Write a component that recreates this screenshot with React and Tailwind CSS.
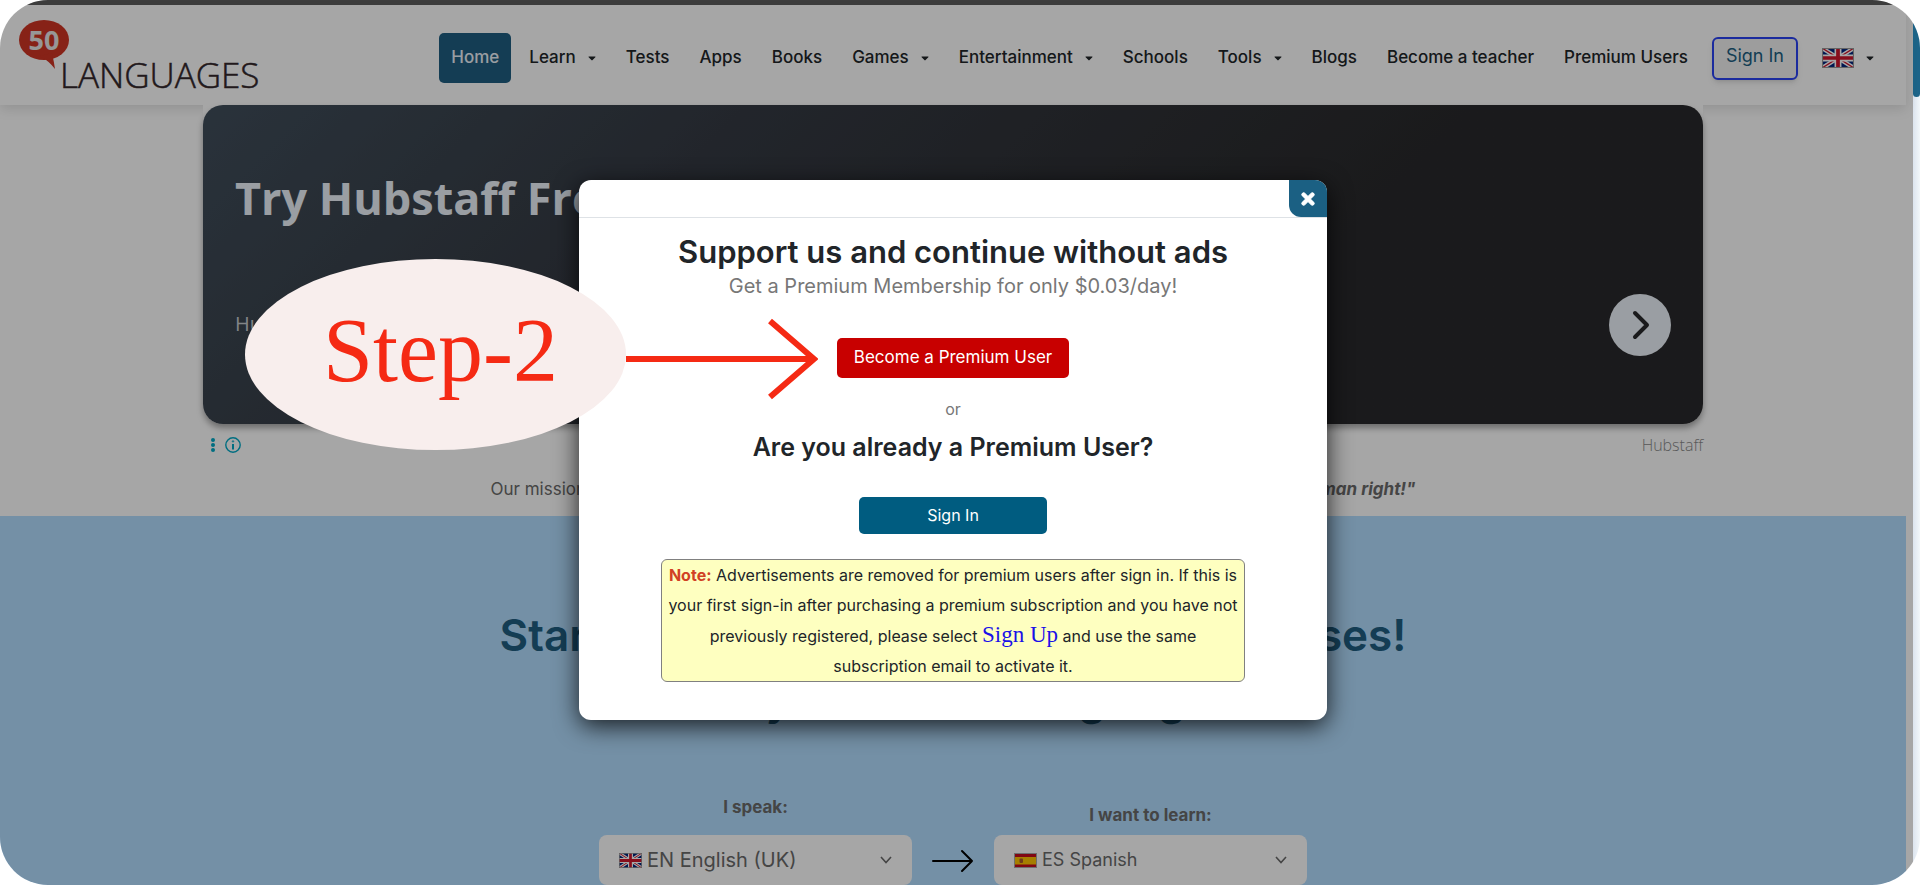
import { FaCaretDown, FaTimes } from "react-icons/fa";

const navItems = [
    { label: "Home", active: true },
    { label: "Learn", menu: true },
    { label: "Tests" },
    { label: "Apps" },
    { label: "Books" },
    { label: "Games", menu: true },
    { label: "Entertainment", menu: true },
    { label: "Schools" },
    { label: "Tools", menu: true },
    { label: "Blogs" },
    { label: "Become a teacher" },
    { label: "Premium Users" },
];

function Logo() {
    return (
        <svg viewBox="0 0 244 80" className="w-[244px] h-20 overflow-visible" role="img" aria-label="50 Languages">
            <ellipse cx="26" cy="22" rx="25" ry="20" fill="#cf3524" />
            <path d="M22 38 Q31 43 37 51 Q36 44 34 35 Z" fill="#cf3524" />
            <text x="26" y="32" textAnchor="middle" fontSize="27" className="font-['Open_Sans'] font-bold" fill="#e8e8e8">
                50
            </text>
            <text x="42" y="70" fontSize="35" className="font-['Open_Sans'] font-light" fill="#33272b" stroke="#33272b" strokeWidth="0.5">
                LANGUAGES
            </text>
        </svg>
    );
}

function FlagUK({ className }) {
    return (
        <svg viewBox="0 0 60 38" preserveAspectRatio="none" className={className} aria-hidden="true">
            <rect width="60" height="38" fill="#00247d" />
            <path d="M0 0 L60 38 M60 0 L0 38" stroke="#fff" strokeWidth="8" />
            <path d="M0 0 L60 38 M60 0 L0 38" stroke="#cf142b" strokeWidth="2.5" />
            <path d="M30 0 V38 M0 19 H60" stroke="#fff" strokeWidth="13" />
            <path d="M30 0 V38 M0 19 H60" stroke="#cf142b" strokeWidth="7" />
            <rect x="1" y="1" width="58" height="36" fill="none" stroke="#999" strokeWidth="2" />
        </svg>
    );
}

function FlagSpain({ className }) {
    return (
        <svg viewBox="0 0 46 30" preserveAspectRatio="none" className={className} aria-hidden="true">
            <rect width="46" height="30" fill="#c60b1e" />
            <rect y="8" width="46" height="15" fill="#ffc400" />
            <rect x="11" y="11" width="7" height="9" rx="2" fill="#ad5a2a" />
            <rect x="1" y="1" width="44" height="28" fill="none" stroke="#aaa" strokeWidth="2" />
        </svg>
    );
}

function Header() {
    return (
        <header className="flex items-center justify-between h-[100px] pt-1.5 pl-[18px] pr-5 bg-white shadow-[0_4px_12px_rgba(0,0,0,0.12)]">
            <a href="#home">
                <Logo />
            </a>
            <nav className="flex items-center gap-1.5 text-[17px] font-medium text-[#212529]">
                {navItems.map((item) =>
                    item.menu ? (
                        <button key={item.label} type="button" className="flex items-center gap-3 h-[50px] px-3">
                            {item.label}
                            <FaCaretDown className="w-2 h-3" />
                        </button>
                    ) : (
                        <a
                            key={item.label}
                            href="#menu"
                            className={
                                item.active
                                    ? "flex items-center h-[50px] px-3 rounded-[5px] bg-[#205e81] text-[#edf3fa]"
                                    : "flex items-center h-[50px] px-3"
                            }
                        >
                            {item.label}
                        </a>
                    )
                )}
                <a
                    href="#signin"
                    className="flex items-center h-[43px] ml-1.5 px-3 pb-1 border-2 border-[#2a42f3] rounded-md bg-[#f2f2f2] text-lg font-normal text-[#205e81] shadow-md"
                >
                    Sign In
                </a>
                <button type="button" aria-label="Language" className="flex items-center gap-3 ml-1.5 px-3">
                    <FlagUK className="w-8 h-5" />
                    <FaCaretDown className="w-2 h-3" />
                </button>
            </nav>
        </header>
    );
}

function AdBanner() {
    return (
        <section className="relative w-full max-w-[1500px] mx-auto bg-white font-['Open_Sans',sans-serif]">
            <div className="flex items-center justify-between h-[319px] px-8 rounded-[20px] bg-linear-135 from-[#404e5b] via-[#353a43] via-30% to-[#29292b] to-70% shadow-[0_4px_6px_rgba(0,0,0,0.35)] text-[#edf3fa]">
                <div className="flex flex-col gap-[82px] pb-6">
                    <h2 className="text-[45px] leading-[60px] font-bold">Try Hubstaff Free</h2>
                    <p className="text-xl leading-7 text-[#c8ccd0]">Hubstaff</p>
                </div>
                <button
                    type="button"
                    aria-label="Open"
                    className="flex items-center justify-center w-[62px] h-[62px] mt-[120px] rounded-full bg-[#edf3fa] text-[#29292b]"
                >
                    <svg viewBox="0 0 30 30" className="w-[30px] h-[30px]" fill="none" stroke="currentColor" strokeWidth="4" strokeLinecap="round" strokeLinejoin="round">
                        <path d="M10 3 L22 15 L10 27" />
                    </svg>
                </button>
            </div>
            <div className="flex items-center justify-between h-[42px] pl-2">
                <div className="flex items-center gap-2.5 text-[#00a9c6]">
                    <svg viewBox="0 0 4 14" className="w-1 h-3.5" fill="currentColor">
                        <circle cx="2" cy="2" r="2" />
                        <circle cx="2" cy="7" r="2" />
                        <circle cx="2" cy="12" r="2" />
                    </svg>
                    <svg viewBox="0 0 16 16" className="w-4 h-4" fill="none" stroke="currentColor">
                        <circle cx="8" cy="8" r="7.2" strokeWidth="1.4" />
                        <path d="M8 7 V12.4" strokeWidth="2" />
                        <circle cx="8" cy="4.4" r="0.7" strokeWidth="1" />
                    </svg>
                </div>
                <span className="text-base font-light text-[#8a8a8a]">Hubstaff</span>
            </div>
        </section>
    );
}

function LanguageSelect({ id, label, option, flag, gap, size }) {
    return (
        <div className="flex flex-col items-center w-[313px]">
            <label htmlFor={id} className={gap + " text-[17px] leading-6 font-bold text-[#6a6a6a]"}>
                {label}
            </label>
            <div className="relative w-full">
                <select id={id} className={size + " appearance-none w-full h-[50px] pl-12 pr-12 rounded-lg bg-white text-[#6a6a6a]"}>
                    <option>{option}</option>
                </select>
                <span className="absolute left-5 top-0 flex items-center h-[50px] pointer-events-none">{flag}</span>
                <span className="absolute right-5 top-0 flex items-center h-[50px] pointer-events-none">
                    <svg viewBox="0 0 12 8" className="w-3 h-2" fill="none" stroke="#6a6a6a" strokeWidth="1.6">
                        <path d="M1 1 L6 6.5 L11 1" />
                    </svg>
                </span>
            </div>
        </div>
    );
}

function Hero() {
    return (
        <section className="grow bg-[#b2ddff] pt-[87px]">
            <h1 className="text-center text-[44px] leading-[64px] font-semibold text-[#205e81]">
                Start learning with our free online courses!
                <br />
                for your native language
            </h1>
            <form className="flex items-end justify-center gap-5 mt-16">
                <LanguageSelect id="speak" label="I speak:" option="EN English (UK)" gap="mb-4" size="text-xl" flag={<FlagUK className="w-[23px] h-[15px]" />} />
                <svg viewBox="0 0 42 24" className="w-[42px] h-6 mb-3" fill="none" stroke="#000" strokeWidth="2">
                    <path d="M1 12 H40 M30 2 L40 12 L30 22" strokeLinecap="round" strokeLinejoin="round" />
                </svg>
                <LanguageSelect id="learn" label="I want to learn:" option="ES Spanish" gap="mb-2" size="text-lg" flag={<FlagSpain className="w-[23px] h-[15px]" />} />
            </form>
        </section>
    );
}

function PremiumModal() {
    return (
        <div role="dialog" aria-modal="true" aria-labelledby="premium-title" className="w-full max-w-[748px] rounded-xl bg-white text-[#212529] shadow-[0_6px_24px_rgba(0,0,0,0.8)]">
            <div className="flex justify-end h-[38px] border-b border-[#dee2e6]">
                <button type="button" aria-label="Close" className="flex items-center justify-center w-[38px] rounded-tr-xl rounded-bl-xl bg-[#1b6083] text-white">
                    <FaTimes className="w-[18px] h-[18px]" stroke="currentColor" strokeWidth="30" />
                </button>
            </div>
            <div className="flex flex-col items-center px-[82px] pt-3.5 pb-[38px] text-center">
                <h2 id="premium-title" className="text-[31px] leading-10 font-semibold">
                    Support us and continue without ads
                </h2>
                <p className="text-xl leading-7 text-[#777]">Get a Premium Membership for only $0.03/day!</p>
                <a href="#premium" className="flex items-center h-10 mt-[38px] px-[17px] rounded-[5px] bg-[#c80000] text-[17px] text-white">
                    Become a Premium User
                </a>
                <p className="mt-[19px] text-base leading-6 text-[#777]">or</p>
                <h3 className="mt-2.5 text-[25px] leading-8 font-semibold">Are you already a Premium User?</h3>
                <button type="button" className="w-[188px] h-[37px] mt-[34px] pb-0.5 rounded-[5px] bg-[#005c80] text-base text-white">
                    Sign In
                </button>
                <p className="w-full mt-[25px] border border-[#808080] rounded-md bg-[#feffc0] text-base leading-[30px]">
                    <strong className="text-[#d14124]">Note:</strong> Advertisements are removed for premium users after sign in. If this is your first
                    sign-in after purchasing a premium subscription and you have not previously registered, please select{" "}
                    <a href="#signup" className="font-['Liberation_Serif',serif] text-[23px] text-[#1a10e8]">
                        Sign Up
                    </a>{" "}
                    and use the same subscription email to activate it.
                </p>
            </div>
        </div>
    );
}

function StepCallout() {
    return (
        <div className="absolute left-[245px] top-[259px] flex items-center pointer-events-none">
            <div className="flex items-center justify-center w-[381px] h-[191px] pb-2 pl-2.5 rounded-[50%] bg-[#f8eeed] font-['Liberation_Serif',serif] text-[90px] leading-none text-[#f52a14]">
                Step-2
            </div>
            <svg viewBox="0 0 192 84" className="w-[192px] h-[84px] mt-2" fill="none" stroke="#f52a14" strokeWidth="6">
                <path d="M0 42 H188 M144 4 L188 42 L144 80" />
            </svg>
        </div>
    );
}

export default function App() {
    return (
        <div className="relative flex h-screen overflow-hidden rounded-[48px] bg-white font-[Inter,sans-serif]">
            <div className="relative flex flex-col grow">
                <div className="shrink-0 h-[5px] bg-[#5f5f5f]"></div>
                <div className="flex flex-col grow mr-[7px]">
                    <Header />
                    <AdBanner />
                    <p className="flex justify-between w-full max-w-[925px] mx-auto pt-[9px] pb-[13px] text-[17px] leading-7 text-[#6a6a6a]">
                        <span>Our mission</span>
                        <em className="font-bold">human right!"</em>
                    </p>
                    <Hero />
                </div>

                {/* Backdrop and dialog */}
                <div className="absolute inset-0 flex items-start justify-center pt-[180px] pr-[7px] bg-black/35">
                    <PremiumModal />
                </div>
            </div>

            {/* Scrollbar */}
            <div className="w-[7px] bg-linear-to-r from-[#dce4ee] to-[#f2f7fa]">
                <div className="h-[97px] rounded-b-full bg-[#1d6488]"></div>
            </div>

            <StepCallout />
        </div>
    );
}
